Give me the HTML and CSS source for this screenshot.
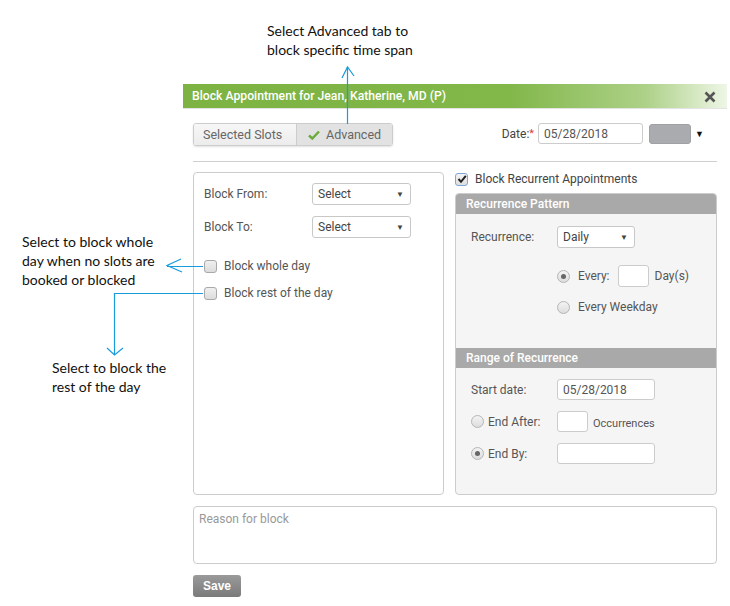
FILE: index.html
```html
<!DOCTYPE html>
<html>
<head>
<meta charset="utf-8">
<link rel="stylesheet" href="styles.css">
</head>
<body>
<div class="page">
  <div class="dialog">
    <div class="dlg-header">
      <span class="dlg-title">Block Appointment for Jean, Katherine, MD (P)</span>
      <svg class="close" width="12" height="12" viewBox="0 0 12 12"><path d="M1.5 1.5 L10.5 10.5 M10.5 1.5 L1.5 10.5" stroke="#555" stroke-width="2.6" stroke-linecap="butt"/></svg>
    </div>
    <div class="dlg-body">
      <div class="toolbar">
        <div class="tabs">
          <div class="tab">Selected Slots</div>
          <div class="tab active"><svg class="check" width="12" height="10" viewBox="0 0 12 10"><path d="M1 5.5 L4.3 8.5 L11 1.5" fill="none" stroke="#6aab3c" stroke-width="2.4"/></svg>Advanced</div>
        </div>
        <div class="date-group">
          <span class="date-label">Date:<span class="req">*</span></span>
          <div class="input date-input">05/28/2018</div>
          <div class="swatch"></div>
          <span class="caret">&#9660;</span>
        </div>
      </div>
      <div class="rule"></div>
      <div class="columns">
        <div class="left-panel">
          <div class="field-row r1">
            <span class="lbl lbl-left">Block From:</span>
            <div class="select sel-left">Select<span class="sel-caret">&#9660;</span></div>
          </div>
          <div class="field-row r2">
            <span class="lbl lbl-left">Block To:</span>
            <div class="select sel-left">Select<span class="sel-caret">&#9660;</span></div>
          </div>
          <div class="check-row c1"><span class="cbox"></span><span class="lbl">Block whole day</span></div>
          <div class="check-row c2"><span class="cbox"></span><span class="lbl">Block rest of the day</span></div>
        </div>
        <div class="right-col">
          <div class="check-row recur-check"><span class="cbox checked"><svg width="10" height="10" viewBox="0 0 10 10"><path d="M1.5 5 L4 7.8 L8.8 1.8" fill="none" stroke="#222" stroke-width="2"/></svg></span><span class="lbl">Block Recurrent Appointments</span></div>
          <div class="recur-panel">
            <div class="sec-header">Recurrence Pattern</div>
            <div class="sec-body pattern">
              <div class="field-row rr1">
                <span class="lbl lbl-right">Recurrence:</span>
                <div class="select sel-right">Daily<span class="sel-caret">&#9660;</span></div>
              </div>
              <div class="field-row rr2 indent">
                <span class="radio on"></span><span class="lbl every">Every:</span>
                <div class="input small-input"></div>
                <span class="lbl days">Day(s)</span>
              </div>
              <div class="field-row rr3 indent">
                <span class="radio"></span><span class="lbl every">Every Weekday</span>
              </div>
            </div>
            <div class="sec-header">Range of Recurrence</div>
            <div class="sec-body range">
              <div class="field-row g1">
                <span class="lbl lbl-right">Start date:</span>
                <div class="input range-input">05/28/2018</div>
              </div>
              <div class="field-row g2">
                <span class="radio rr"></span><span class="lbl rlbl">End After:</span>
                <div class="input small-input occ"></div>
                <span class="lbl occ-lbl">Occurrences</span>
              </div>
              <div class="field-row g3">
                <span class="radio rr on"></span><span class="lbl rlbl">End By:</span>
                <div class="input range-input"></div>
              </div>
            </div>
          </div>
        </div>
      </div>
      <div class="reason">Reason for block</div>
      <div class="save">Save</div>
    </div>
  </div>

  <div class="note note-top">Select Advanced tab to<br>block specific time span</div>
  <div class="note note-left">Select to block whole<br>day when no slots are<br>booked or blocked</div>
  <div class="note note-bottom">Select to block the<br>rest of the day</div>
  <svg class="arrows" width="730" height="606" viewBox="0 0 730 606">
    <g fill="none" stroke="#1a9bdc" stroke-width="1.2">
      <path d="M347.5 67 V124"/>
      <path d="M342 78 L347.5 67 L354 76"/>
      <path d="M203 266.5 H167"/>
      <path d="M181 259 L167 265.5 L182 272"/>
      <path d="M203 293.5 H114.5 V355"/>
      <path d="M107 348 L114.5 355 L123 348"/>
    </g>
  </svg>
</div>
</body>
</html>
```
FILE: styles.css
```css
* { box-sizing: border-box; }
html, body { margin: 0; padding: 0; background: #fff; }
body { font-family: Roboto, "Liberation Sans", Arial, sans-serif; font-size: 12px; color: #555; }
.page { position: relative; width: 730px; height: 606px; overflow: hidden; padding-top: 84px; }

.dialog { margin-left: 183px; width: 544px; }
.dlg-header {
  height: 25px;
  background: linear-gradient(to right, #7cb342 0%, #82b74a 60%, #add188 85%, #eef6e6 100%);
  border-bottom: 1px solid #e3e3e3;
  display: flex; align-items: center; justify-content: space-between;
  padding: 0 11px 0 9px;
}
.dlg-title { color: #fff; font-size: 12.2px; font-weight: 500; }
.close { display: block; margin-top: 2px; }

.dlg-body { padding: 0 10px; }
.toolbar { display: flex; justify-content: space-between; align-items: flex-start; margin-top: 14px; height: 24px; }
.tabs { display: flex; height: 23px; border: 1px solid #ccc; border-radius: 3px; box-shadow: 0 1px 2px rgba(0,0,0,0.12); overflow: hidden; }
.tab { display: flex; align-items: center; padding: 0 9px; font-size: 12.5px; color: #666; white-space: nowrap; background: linear-gradient(#f7f7f7, #ececec); }
.tab:first-child { width: 103px; border-right: 1px solid #ccc; }
.tab.active { width: 95px; background: #e2e2e2; padding-left: 11px; }
.check { margin-right: 6px; flex: none; }

.date-group { display: flex; align-items: center; margin-right: 13px; height: 21px; }
.date-label { color: #444; font-size: 12px; margin-right: 4px; }
.req { color: #e53935; vertical-align: top; font-size: 11px; }
.input { border: 1px solid #ccc; border-radius: 3px; background: #fff; height: 21px; display: flex; align-items: center; padding: 0 5px; font-size: 12px; color: #555; }
.date-input { width: 105px; }
.swatch { width: 42px; height: 20px; background: #a9abae; border: 1px solid #9fa1a4; border-radius: 3px; margin-left: 6px; }
.caret { font-size: 9px; color: #111; margin-left: 4px; }

.rule { height: 1px; background: #cfcfcf; margin-top: 14px; }
.columns { display: flex; gap: 11px; margin-top: 10px; }
.left-panel { width: 251px; height: 323px; border: 1px solid #ccc; border-radius: 4px; padding: 0 10px; }

.field-row { display: flex; align-items: center; }
.lbl { color: #555; font-size: 12px; white-space: nowrap; }
.lbl-left { width: 108px; }
.select { height: 22px; border: 1px solid #c8c8c8; border-radius: 3px; background: #fff; display: flex; align-items: center; justify-content: space-between; padding: 0 6px 0 5px; font-size: 12px; color: #444; }
.sel-left { width: 99px; }
.sel-caret { font-size: 8px; color: #444; }
.r1 { margin-top: 10px; height: 22px; }
.r2 { margin-top: 11px; height: 22px; }

.check-row { display: flex; align-items: center; height: 14px; }
.c1 { margin-top: 21px; }
.c2 { margin-top: 13px; }
.cbox { width: 13px; height: 13px; border: 1px solid #a9a9a9; border-radius: 3px; background: linear-gradient(#f0f0f0, #dcdcdc); margin-right: 7px; flex: none; display: flex; align-items: center; justify-content: center; }
.cbox.checked { border-color: #7ea6d8; background: linear-gradient(#f4f4f4, #dedede); }

.right-col { width: 262px; }
.recur-check { height: 14px; margin-top: 0; }
.recur-check .lbl { font-size: 12px; color: #444; }
.recur-panel { margin-top: 7px; height: 302px; border: 1px solid #ccc; border-radius: 4px; background: #f5f5f5; overflow: hidden; }
.sec-header { height: 20px; background: #a9a9a9; color: #fff; font-size: 12px; font-weight: 500; display: flex; align-items: center; padding-left: 10px; }
.sec-body { padding: 0 15px; display: flow-root; }
.pattern { height: 134px; }
.lbl-right { width: 86px; }
.sel-right { width: 78px; }
.rr1 { margin-top: 12px; height: 22px; }
.rr2 { margin-top: 17px; height: 22px; }
.rr3 { margin-top: 12px; height: 16px; }
.indent { padding-left: 86px; }
.radio { width: 13px; height: 13px; border-radius: 50%; border: 1px solid #b5b5b5; background: linear-gradient(#f3f3f3, #dddddd); flex: none; position: relative; margin-right: 8px; }
.radio.rr { margin-right: 4px; }
.radio.on::after { content: ""; position: absolute; left: 3px; top: 3px; width: 5px; height: 5px; border-radius: 50%; background: #666; }
.every { color: #555; }
.small-input { width: 31px; height: 22px; margin-left: 8px; }
.days { margin-left: 6px; }
.g1 { margin-top: 11px; height: 21px; }
.g2 { margin-top: 11px; height: 21px; }
.g3 { margin-top: 11px; height: 21px; }
.range-input { width: 98px; }
.rlbl { width: 69px; }
.small-input.occ { margin-left: 0; width: 31px; height: 21px; }
.occ-lbl { font-size: 11px; margin-left: 5px; margin-top: 3px; }

.reason { margin-top: 11px; height: 58px; border: 1px solid #ccc; border-radius: 4px; padding: 5px 5px; color: #999; font-size: 12px; }
.save { margin-top: 11px; width: 48px; height: 22px; border-radius: 3px; background: linear-gradient(#9a9a9a, #7a7a7a); color: #fff; font-weight: bold; font-size: 12px; display: flex; align-items: center; justify-content: center; font-family: "Liberation Sans", Arial, sans-serif; }

.note { position: absolute; font-family: Lato, "Open Sans", sans-serif; font-size: 14px; line-height: 19px; color: #111; }
.note-top { left: 267px; top: 21px; }
.note-left { left: 22px; top: 232px; }
.note-bottom { left: 52px; top: 358px; }
.arrows { position: absolute; left: 0; top: 0; pointer-events: none; }
```
